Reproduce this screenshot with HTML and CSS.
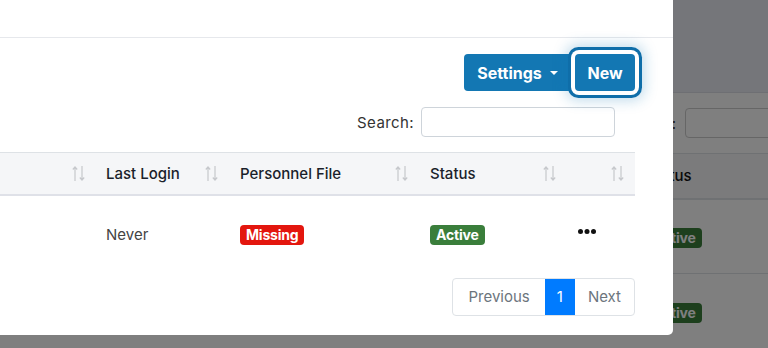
FILE: index.html
```html
<!DOCTYPE html>
<html lang="en">
<head>
<meta charset="utf-8">
<title>Users</title>
<link rel="stylesheet" href="styles.css">
</head>
<body>
<div class="page">
  <div class="page-header"></div>
  <div class="page-body">
    <div class="page-search"><span>Search:</span><span class="page-input"></span></div>
    <table class="page-table">
      <thead><tr><th>Status</th></tr></thead>
      <tbody>
        <tr><td><span class="badge badge-green">Active</span></td></tr>
        <tr><td><span class="badge badge-green">Active</span></td></tr>
      </tbody>
    </table>
  </div>
</div>
<div class="backdrop"></div>
<div class="modal">
  <div class="modal-header"></div>
  <div class="modal-body">
    <div class="toolbar">
      <button class="btn btn-settings">Settings <span class="caret"></span></button>
      <button class="btn btn-new">New</button>
    </div>
    <div class="search-row">
      <label class="search-label">Search:</label>
      <input class="search-input" type="text">
    </div>
    <table class="grid">
      <thead>
        <tr>
          <th class="c1"><span></span><svg class="sort" viewBox="0 0 13 17"><path d="M3 16V2M0.8 4.5L3 2l2.2 2.5M10 1v14M7.8 12.5L10 15l2.2-2.5"/></svg></th>
          <th class="c2"><span>Last Login</span><svg class="sort" viewBox="0 0 13 17"><path d="M3 16V2M0.8 4.5L3 2l2.2 2.5M10 1v14M7.8 12.5L10 15l2.2-2.5"/></svg></th>
          <th class="c3"><span>Personnel File</span><svg class="sort" viewBox="0 0 13 17"><path d="M3 16V2M0.8 4.5L3 2l2.2 2.5M10 1v14M7.8 12.5L10 15l2.2-2.5"/></svg></th>
          <th class="c4"><span>Status</span><svg class="sort" viewBox="0 0 13 17"><path d="M3 16V2M0.8 4.5L3 2l2.2 2.5M10 1v14M7.8 12.5L10 15l2.2-2.5"/></svg></th>
          <th class="c5"><span></span><svg class="sort" viewBox="0 0 13 17"><path d="M3 16V2M0.8 4.5L3 2l2.2 2.5M10 1v14M7.8 12.5L10 15l2.2-2.5"/></svg></th>
        </tr>
      </thead>
      <tbody>
        <tr>
          <td></td>
          <td class="muted">Never</td>
          <td><span class="badge badge-red">Missing</span></td>
          <td><span class="badge badge-green">Active</span></td>
          <td class="actions"><svg class="dots" viewBox="0 0 18 5"><circle cx="2.5" cy="2.5" r="2.5"/><circle cx="9" cy="2.5" r="2.5"/><circle cx="15.5" cy="2.5" r="2.5"/></svg></td>
        </tr>
      </tbody>
    </table>
    <div class="pager-row">
      <ul class="pager">
        <li class="pg pg-prev">Previous</li>
        <li class="pg pg-active">1</li>
        <li class="pg">Next</li>
      </ul>
    </div>
  </div>
</div>
</body>
</html>
```
FILE: styles.css
```css
* { box-sizing: border-box; }
html, body { margin: 0; height: 100%; }
body {
  font-family: Inter, "Open Sans", sans-serif;
  background: #fff;
  overflow: hidden;
  position: relative;
  width: 768px;
  height: 348px;
}

/* underlying page */
.page { width: 768px; height: 348px; }
.page-header { height: 93px; background: #ebedf4; border-bottom: 1px solid #dcdfe6; }
.page-body { padding-left: 622px; }
.page-search {
  display: flex; align-items: center; gap: 9px;
  height: 60px; font-size: 15px; color: #333; white-space: nowrap;
}
.page-input { flex: none; width: 200px; height: 30px; border: 1px solid #ccc; border-radius: 4px; }
.page-table { border-collapse: collapse; margin-left: 12px; width: 200px; }
.page-table th { text-align: left; font-weight: 500; font-size: 15px; color: #111;
  height: 45px; padding: 0 12px; background: #f6f6f8; border-top: 1px solid #dee2e6; border-bottom: 2px solid #dee2e6; }
.page-table td { height: 75px; padding: 2px 13px 0; border-bottom: 1px solid #dee2e6; }

.backdrop { position: absolute; inset: 0; background: rgba(0,0,0,0.5); }

/* modal */
.modal {
  position: absolute; left: -96px; top: -30px; width: 769px;
  background: #fff; border-radius: 5px;
}
.modal-header { height: 68px; border-bottom: 1px solid #e6e8ec; }
.modal-body { padding: 16px 38px 19px 40px; }

.toolbar { display: flex; justify-content: flex-end; gap: 5px; }
.btn {
  font-family: inherit; font-weight: 700; font-size: 16px; color: #fff;
  background: #1377b3; border: 0; border-radius: 4px; height: 37px;
  padding: 0 12px; display: flex; align-items: center; gap: 8px;
}
.btn-settings { width: 107px; justify-content: center; border-radius: 4px 0 0 4px; margin-right: -1px; }
.btn-new { width: 60px; justify-content: center; position: relative;
  box-shadow: 0 0 0 4px #fff, 0 0 0 7px #0f6ea9, 0 0 14px 9px rgba(19,119,179,0.28); }
.caret { width: 0; height: 0; border-left: 4px solid transparent; border-right: 4px solid transparent; border-top: 4px solid #fff; }

.search-row { display: flex; justify-content: flex-end; align-items: center; gap: 7px; margin-top: 16px; padding-right: 20px; }
.search-label { font-size: 15px; color: #333; letter-spacing: 0.4px; }
.search-input { width: 194px; height: 30px; border: 1px solid #ced4da; border-radius: 4px; }

.grid { width: 691px; border-collapse: collapse; margin-top: 15px; table-layout: fixed; }
.grid th {
  height: 42px; background: #f5f6f8; border-top: 1px solid #dee2e6; border-bottom: 2px solid #dfe1e8;
  font-size: 15px; font-weight: 500; color: #1b1f2b; text-align: left; padding: 0 10px 0 12px;
  white-space: nowrap; vertical-align: middle;
}
.grid th span { display: inline-block; }
.grid th .sort { width: 13px; height: 17px; float: right; margin-top: 1px; }
.sort path { fill: none; stroke: #c6c8cc; stroke-width: 1.2; }
.c1 { width: 150px; padding-right: 9px !important; }
.c2 { width: 134px; }
.c3 { width: 190px; }
.c4 { width: 150px; padding-right: 12px !important; }
.c5 { width: 67px; padding-right: 11px !important; }
.grid td { height: 75px; padding: 4px 12px 0; font-size: 15px; vertical-align: middle; }
.muted { color: #444; }
.actions { padding-left: 10px !important; }
.dots { width: 18px; height: 5px; display: block; fill: #111; margin-top: -6px; }

.badge {
  display: inline-block; color: #fff; font-weight: 700; font-size: 14px; line-height: 20px;
  padding: 0 6px; border-radius: 4px; letter-spacing: -0.2px;
}
.badge-red { background: #e3160e; }
.badge-green { background: #3a7e3b; }

.pager-row { display: flex; justify-content: flex-end; margin-top: 8px; }
.pager { list-style: none; margin: 0; padding: 0; display: flex; border: 1px solid #dee2e6; border-radius: 4px; height: 38px; }
.pg { font-size: 15px; color: #6c757d; padding: 0 13px; display: flex; align-items: center; }
.pg-prev { padding: 0 15px 0 16px; }
.pg-active { background: #007bff; color: #fff; padding: 0 12px; }
```
